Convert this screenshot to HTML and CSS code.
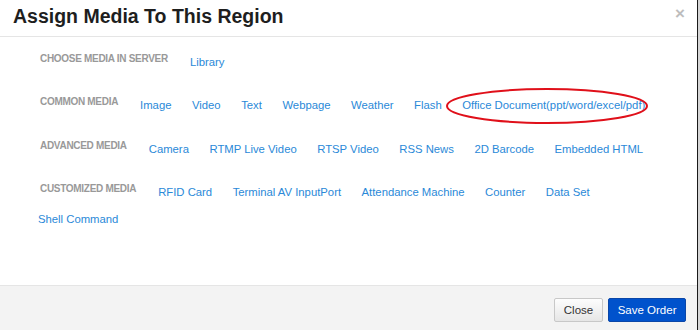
FILE: index.html
```html
<!DOCTYPE html>
<html>
<head>
<meta charset="utf-8">
<link rel="stylesheet" href="styles.css">
</head>
<body>
<div class="modal">
  <div class="modal-header">
    <h4 class="modal-title">Assign Media To This Region</h4>
    <span class="close">×</span>
  </div>
  <div class="modal-body">
    <div class="media-row">
      <span class="group-label">CHOOSE MEDIA IN SERVER</span><a class="media-link">Library</a>
    </div>
    <div class="media-row">
      <span class="group-label">COMMON MEDIA</span><a class="media-link">Image</a><a class="media-link">Video</a><a class="media-link">Text</a><a class="media-link">Webpage</a><a class="media-link">Weather</a><a class="media-link">Flash</a><a class="media-link highlighted">Office Document(ppt/word/excel/pdf)<svg class="ring" width="204" height="38" viewBox="0 0 204 38"><ellipse cx="102" cy="19" rx="100" ry="17" fill="none" stroke="#e0101a" stroke-width="2"/></svg></a>
    </div>
    <div class="media-row">
      <span class="group-label">ADVANCED MEDIA</span><a class="media-link">Camera</a><a class="media-link">RTMP Live Video</a><a class="media-link">RTSP Video</a><a class="media-link">RSS News</a><a class="media-link">2D Barcode</a><a class="media-link">Embedded HTML</a>
    </div>
    <div class="media-row">
      <span class="group-label">CUSTOMIZED MEDIA</span><a class="media-link">RFID Card</a><a class="media-link">Terminal AV InputPort</a><a class="media-link">Attendance Machine</a><a class="media-link">Counter</a><a class="media-link">Data Set</a><a class="media-link">Shell Command</a>
    </div>
  </div>
  <div class="modal-footer">
    <button class="btn btn-default">Close</button>
    <button class="btn btn-primary">Save Order</button>
  </div>
</div>
</body>
</html>
```

FILE: styles.css
```css
html, body {
  margin: 0;
  padding: 0;
}
body {
  background: #d6d6d6;
  font-family: "Liberation Sans", Arial, sans-serif;
  width: 700px;
  height: 330px;
  overflow: hidden;
}
.modal {
  width: 697px;
  height: 330px;
  background: #fff;
  border-right: 1px solid #1a1a1a;
  display: flex;
  flex-direction: column;
  box-sizing: content-box;
}
.modal-header {
  height: 36px;
  border-bottom: 1px solid #e5e5e5;
  display: flex;
  align-items: flex-start;
  padding: 0 12px 0 13px;
}
.modal-title {
  margin: 0;
  font-size: 19.5px;
  line-height: 33px;
  font-weight: bold;
  color: #1e1e1e;
}
.close {
  margin-left: auto;
  font-size: 17px;
  font-weight: bold;
  line-height: 28px;
  color: #bdbdbd;
}
.modal-body {
  flex: 1;
  padding: 12px 15px 0 38px;
}
.media-row {
  line-height: 27px;
  font-size: 11.3px;
  margin-bottom: 16.4px;
}
.group-label {
  display: inline-block;
  font-size: 10px;
  line-height: 14px;
  font-weight: bold;
  color: #999;
  letter-spacing: -0.3px;
  margin-left: 2px;
  margin-right: 22px;
  vertical-align: 4px;
}
.media-link {
  display: inline-block;
  color: #2a89d8;
  margin-right: 20.5px;
  cursor: pointer;
}
.highlighted {
  position: relative;
}
.ring {
  position: absolute;
  left: -17px;
  top: -5px;
}
.modal-footer {
  height: 45px;
  border-top: 1px solid #e5e5e5;
  background: #f3f3f3;
  display: flex;
  justify-content: flex-end;
  align-items: flex-start;
  gap: 5px;
  padding: 12px 11px 0 0;
  box-sizing: border-box;
}
.btn {
  font-family: "Liberation Sans", Arial, sans-serif;
  font-size: 11.5px;
  height: 24px;
  padding: 0 9px;
  border-radius: 2px;
  line-height: 22px;
}
.btn-default {
  background: linear-gradient(#fdfdfd, #e6e6e6);
  border: 1px solid #c8c8c8;
  color: #333;
}
.btn-primary {
  background: #0052cc;
  border: 1px solid #0a46a8;
  color: #fff;
  padding: 0 8.5px;
}
```
